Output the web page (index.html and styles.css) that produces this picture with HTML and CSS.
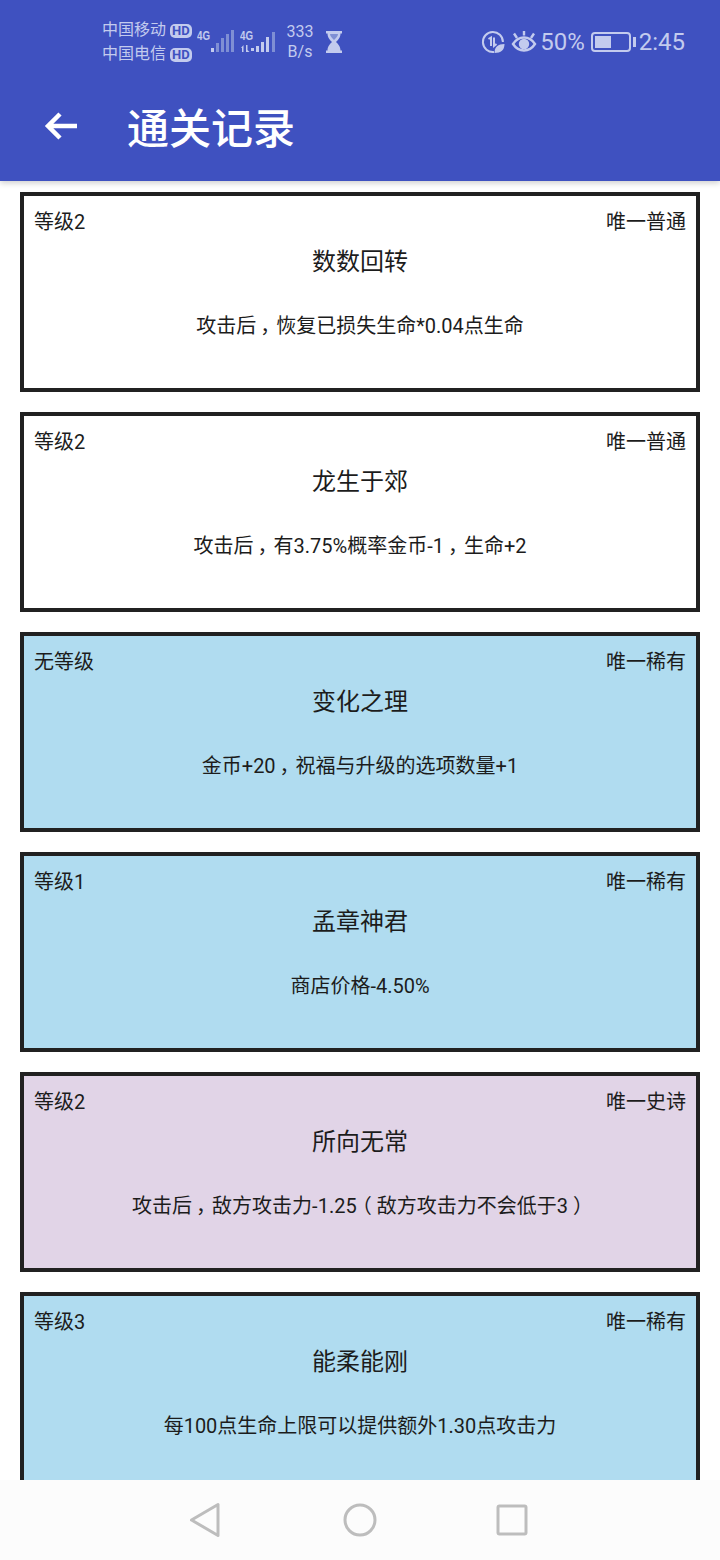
FILE: index.html
```html
<!DOCTYPE html>
<html lang="zh-CN">
<head>
  <meta charset="UTF-8">
  <meta name="viewport" content="width=device-width, initial-scale=1.0">
  <title>通关记录</title>
  <link rel="stylesheet" href="styles.css">
</head>
<body>
  <div id="screen">
    <header id="app-bar">
      <div id="status-bar">
        <div class="carriers">
          <div class="carrier">中国移动<span class="hd">HD</span></div>
          <div class="carrier">中国电信<span class="hd">HD</span></div>
        </div>
        <svg class="signal" width="40" height="26" viewBox="0 0 40 26">
          <text x="0" y="12" class="net-label" textLength="13" lengthAdjust="spacingAndGlyphs">4G</text>
          <g fill="#7f8fd4">
            <rect x="14" y="20" width="3" height="4" fill="#c3cbee"/>
            <rect x="19" y="15" width="3" height="9"/>
            <rect x="24" y="10" width="3" height="14"/>
            <rect x="29" y="6" width="3" height="18"/>
            <rect x="34" y="2" width="3" height="22"/>
          </g>
        </svg>
        <svg class="signal" width="38" height="26" viewBox="0 0 38 26">
          <text x="0" y="12" class="net-label" textLength="13" lengthAdjust="spacingAndGlyphs">4G</text>
          <g fill="#c3cbee">
            <path d="M1 20l2.500-3v7H2v-4zM6 17h1.500v5l2 2H6z"/>
            <rect x="11" y="20" width="3" height="3"/>
            <rect x="16" y="18" width="3" height="6"/>
            <rect x="21" y="14" width="3" height="10"/>
            <rect x="26" y="9" width="3" height="15"/>
          </g>
          <rect x="32" y="4" width="3" height="20" fill="#7f8fd4"/>
        </svg>
        <div class="speed">333<br>B/s</div>
        <svg class="hourglass" width="18" height="24" viewBox="0 0 18 24">
          <path d="M1 1h16v2.500h-1.500c0 4-2.500 6.500-4.500 8.500 2 2 4.500 4.500 4.500 8.500H17V23H1v-2.500h1.500c0-4 2.500-6.500 4.500-8.500-2-2-4.500-4.500-4.500-8.500H1z" fill="#c3cbee"/>
          <path d="M5 4h8c0 2-2 4-4 6-2-2-4-4-4-6z" fill="#7f8fd4"/>
        </svg>
        <div class="status-right">
          <svg width="24" height="24" viewBox="0 0 24 24" fill="none" stroke="#c3cbee" stroke-width="2">
            <path d="M13 21.900A10 10 0 1 1 21.900 12"/>
            <path d="M7.500 9l2.500-1.500V16M13 7.500V16l2.500-2"/>
            <path d="M13.500 23c0-6 3.500-9 10-9 0 6-3.500 9-10 9z" fill="#c3cbee" stroke="none"/>
          </svg>
          <svg width="26" height="22" viewBox="0 0 26 22" fill="none" stroke="#c3cbee" stroke-width="2.400">
            <path d="M2 13c3-4.500 7-6.500 11-6.500s8 2 11 6.500c-3 4.500-7 6.500-11 6.500S5 17.500 2 13z"/>
            <circle cx="13" cy="13" r="4" fill="#c3cbee"/>
            <path d="M3 2.500l3 4.500M13 0v4.500M23 2.500l-3 4.500"/>
          </svg>
          <span class="pct">50%</span>
          <div class="battery"><div class="battery-level"></div></div>
          <span class="clock">2:45</span>
        </div>
      </div>
      <div id="title-bar">
        <svg width="34" height="30" viewBox="0 0 34 30" fill="none" stroke="#fff" stroke-width="4.500">
          <path d="M33 15H4M16 3L4 15l12 12"/>
        </svg>
        <h1>通关记录</h1>
      </div>
    </header>

    <main id="record-list">
      <section class="card">
        <div class="card-top"><span>等级2</span><span>唯一普通</span></div>
        <h2>数数回转</h2>
        <p>攻击后<span class="comma">，</span>恢复已损失生命*0.04点生命</p>
      </section>
      <section class="card">
        <div class="card-top"><span>等级2</span><span>唯一普通</span></div>
        <h2>龙生于郊</h2>
        <p>攻击后<span class="comma">，</span>有3.75%概率金币-1<span class="comma">，</span>生命+2</p>
      </section>
      <section class="card rare">
        <div class="card-top"><span>无等级</span><span>唯一稀有</span></div>
        <h2>变化之理</h2>
        <p>金币+20<span class="comma">，</span>祝福与升级的选项数量+1</p>
      </section>
      <section class="card rare">
        <div class="card-top"><span>等级1</span><span>唯一稀有</span></div>
        <h2>孟章神君</h2>
        <p>商店价格-4.50%</p>
      </section>
      <section class="card epic">
        <div class="card-top"><span>等级2</span><span>唯一史诗</span></div>
        <h2>所向无常</h2>
        <p>攻击后<span class="comma">，</span>敌方攻击力-1.25<span class="paren">（</span>敌方攻击力不会低于3<span class="paren">）</span></p>
      </section>
      <section class="card rare">
        <div class="card-top"><span>等级3</span><span>唯一稀有</span></div>
        <h2>能柔能刚</h2>
        <p>每100点生命上限可以提供额外1.30点攻击力</p>
      </section>
    </main>

    <nav id="nav-bar">
      <svg width="32" height="36" viewBox="0 0 32 36" fill="none" stroke="#bdbdbd" stroke-width="3" stroke-linejoin="round">
        <path d="M29 2.500V33.500L2.500 18z"/>
      </svg>
      <svg width="34" height="34" viewBox="0 0 34 34" fill="none" stroke="#bdbdbd" stroke-width="3">
        <circle cx="17" cy="17" r="15"/>
      </svg>
      <svg class="nav-recent" width="32" height="32" viewBox="0 0 32 32" fill="none" stroke="#bdbdbd" stroke-width="3" stroke-linejoin="round">
        <rect x="2" y="2" width="28" height="28" rx="1.500"/>
      </svg>
    </nav>
  </div>
</body>
</html>
```

FILE: styles.css
```css
* {
  box-sizing: border-box;
}

body {
  margin: 0;
  font-family: Roboto, "Noto Sans CJK SC", sans-serif;
  color: #1c1c1c;
}

#screen {
  width: 720px;
  height: 1560px;
  display: flex;
  flex-direction: column;
  overflow: hidden;
  background-color: #fcfcfc;
}

#app-bar {
  height: 181px;
  flex-shrink: 0;
  background-color: #3f51c0;
  box-shadow: 0 2px 6px rgba(0, 0, 0, 0.2);
  position: relative;
  z-index: 1;
}

#status-bar {
  height: 84px;
  display: flex;
  align-items: center;
  padding: 0 35px 0 102px;
  color: #c3cbee;
}

.carriers {
  font-size: 16px;
  line-height: 24px;
  width: 95px;
}

.carrier {
  white-space: nowrap;
}

.hd {
  display: inline-block;
  margin-left: 4px;
  background-color: #c3cbee;
  color: #3f51c0;
  font-size: 13px;
  font-weight: 700;
  line-height: 14px;
  padding: 0 2px;
  border-radius: 5px;
}

.signal {
  margin-right: 3px;
  margin-top: -2px;
}

.net-label {
  font-family: "Liberation Sans", sans-serif;
  font-size: 13px;
  font-weight: 700;
  fill: #c3cbee;
}

.speed {
  font-size: 16px;
  line-height: 20px;
  text-align: center;
  margin-left: 4px;
  width: 30px;
}

.hourglass {
  margin-left: 10px;
}

.status-right {
  margin-left: auto;
  display: flex;
  align-items: center;
  gap: 6px;
}

.pct,
.clock {
  font-size: 24px;
}

.pct {
  margin-left: -3px;
}

.clock {
  margin-left: 2px;
}

.battery {
  width: 40px;
  height: 20px;
  border: 2px solid #c3cbee;
  border-radius: 4px;
  padding: 2px;
  position: relative;
}

.battery::after {
  content: "";
  position: absolute;
  right: -7px;
  top: 3px;
  width: 3px;
  height: 10px;
  background-color: #c3cbee;
}

.battery-level {
  width: 50%;
  height: 100%;
  background-color: #c3cbee;
}

#title-bar {
  height: 90px;
  margin-top: -3px;
  display: flex;
  align-items: center;
  padding: 0 0 0 44px;
}

h1 {
  margin: -2px 0 0 49px;
  font-size: 42px;
  font-weight: 500;
  color: #fff;
}

#record-list {
  flex: 1;
  min-height: 0;
  overflow: hidden;
  padding: 11px 20px 0;
  display: flex;
  flex-direction: column;
  gap: 20px;
  background-color: #fff;
}

.card {
  height: 200px;
  flex-shrink: 0;
  border: 4px solid #212121;
  padding: 13px 10px 0;
  background-color: #fff;
  text-align: center;
}

.card.rare {
  background-color: #b0dcf0;
}

.card.epic {
  background-color: #e1d4e7;
}

.card-top {
  display: flex;
  justify-content: space-between;
  font-size: 20px;
  line-height: 26px;
}

h2 {
  margin: 10px 0 0;
  font-size: 24px;
  font-weight: 400;
  line-height: 34px;
}

.card p {
  margin: 34px 0 0;
  font-size: 20px;
  line-height: 26px;
}

.comma,
.paren {
  font-feature-settings: "halt";
}

.comma {
  padding: 0 0.3em 0 0.2em;
}

.paren {
  padding: 0 0.25em;
}

#nav-bar {
  height: 80px;
  flex-shrink: 0;
  display: flex;
  align-items: center;
  justify-content: center;
  gap: 122px;
  padding-right: 3px;
  background-color: #fcfcfc;
}

.nav-recent {
  margin-left: -3px;
}
```
